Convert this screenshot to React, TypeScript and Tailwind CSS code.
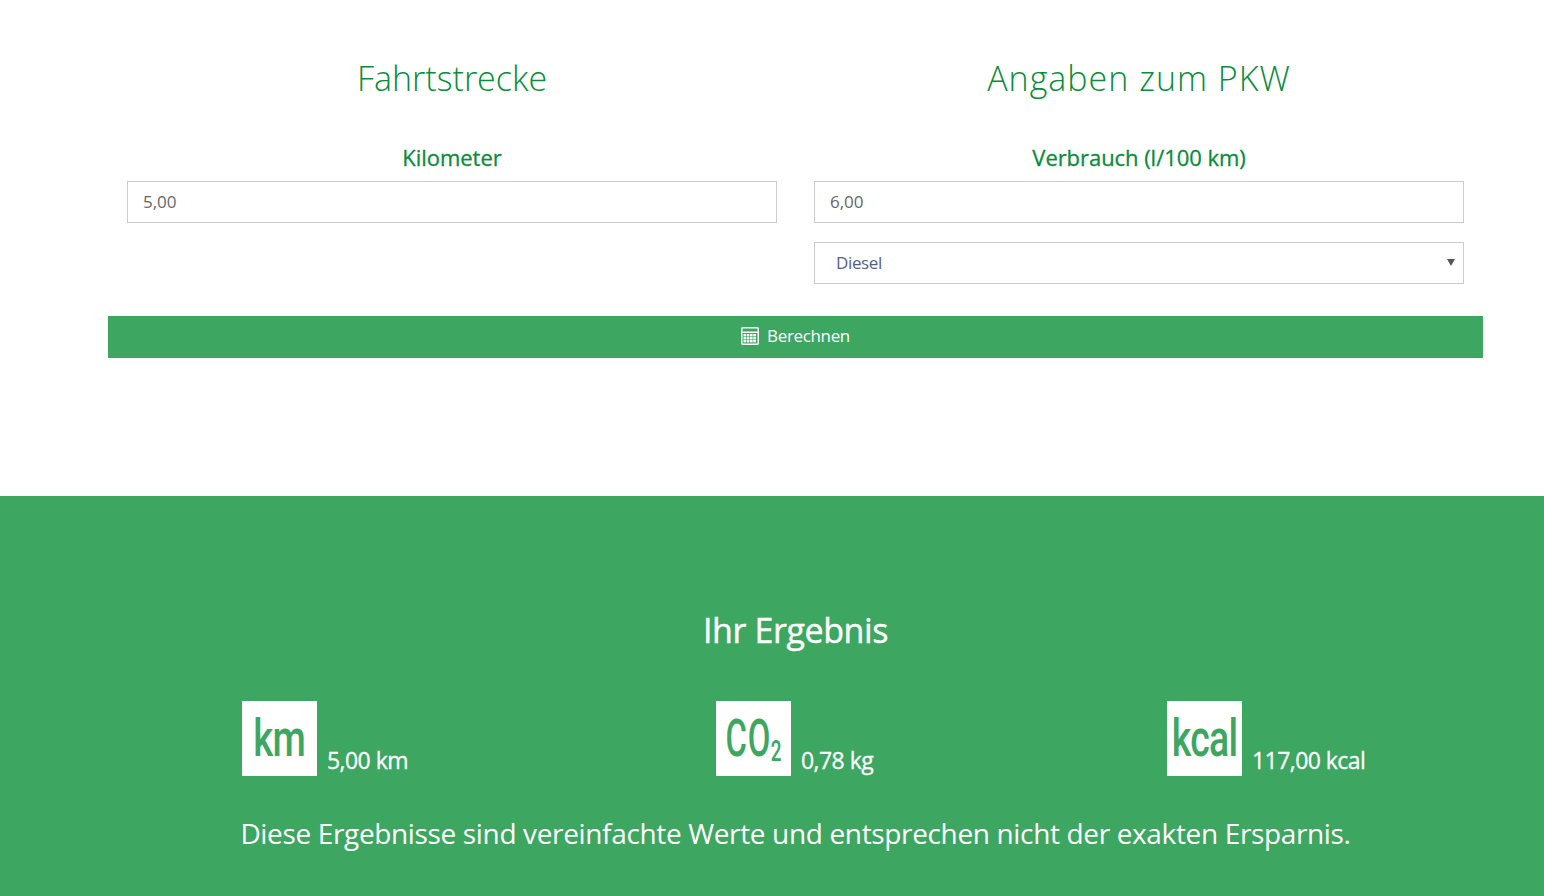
import React from 'react';

const font = { fontFamily: '"Open Sans", "Noto Sans", sans-serif' };

const CalculatorIcon = () => (
  <svg width="18" height="18" viewBox="0 0 18 18" className="block">
    <rect x="0.75" y="0.75" width="16.5" height="16.5" rx="1" fill="none" stroke="#fff" strokeWidth="1.5" />
    <rect x="1" y="4.5" width="16" height="1.5" fill="#fff" />
    {[7, 10, 13].map((y) =>
      [2.5, 5.75, 9, 12.25].map((x) => <rect key={`${x}-${y}`} x={x} y={y} width="2.6" height="2.4" fill="#fff" />)
    )}
  </svg>
);

const Field = ({ label, value }: { label: string; value: string }) => (
  <>
    <label className="block text-center text-[22px] leading-[30px] tracking-[-0.05px] [-webkit-text-stroke:0.3px] text-[#0a8c3a] mb-[8px] -mt-[1px] pb-[1px]">{label}</label>
    <input
      readOnly
      value={value}
      className="block w-full h-[42px] border border-[#cccccc] bg-white pl-[15px] pr-4 pb-[2px] text-[17px] tracking-[-0.05px] text-[#666666] outline-none"
    />
  </>
);

const ResultItem = ({ badge, value, badgeClass }: { badge: React.ReactNode; value: string; badgeClass: string }) => (
  <div className="flex items-end">
    <div className="w-[75px] h-[75px] bg-white flex items-center justify-center overflow-hidden shrink-0">
      <span className={`block font-medium text-[#3da661] ${badgeClass}`} style={{ fontFamily: '"Roboto", sans-serif' }}>
        {badge}
      </span>
    </div>
    <span className="ml-[10px] mb-[1px] text-[23px] leading-[30px] tracking-[-0.55px] [-webkit-text-stroke:0.3px] text-white">{value}</span>
  </div>
);

export default function App() {
  return (
    <div className="min-h-[896px] bg-white" style={font}>
      <section className="h-[496px] px-[108px] pt-[56px]">
        <div className="w-[1375px]">
          <div className="grid grid-cols-[687px_688px]">
            <div className="pl-[19px] pr-[18px]">
              <h2 className="text-center text-[34px] leading-[44px] font-light text-[#0a8c3a] mb-[43px]">Fahrtstrecke</h2>
              <Field label="Kilometer" value="5,00" />
            </div>
            <div className="px-[19px]">
              <h2 className="text-center text-[34px] leading-[44px] font-light tracking-[1px] text-[#0a8c3a] mb-[43px]">Angaben zum PKW</h2>
              <Field label="Verbrauch (l/100 km)" value="6,00" />
              <div className="relative mt-[19px]">
                <select className="block w-full h-[42px] appearance-none border border-[#cccccc] bg-white pl-[21px] pb-[1px] text-[17px] tracking-[-0.35px] text-[#555f85] outline-none">
                  <option>Diesel</option>
                </select>
                <span className="absolute right-[9px] top-[17px] w-0 h-0 border-x-[4px] border-x-transparent border-t-[7px] border-t-[#555555]" />
              </div>
            </div>
          </div>
          <button className="mt-[32px] w-full h-[42px] bg-[#3da661] text-white flex items-center justify-center gap-[8px] pb-[2px] text-[17px] tracking-[-0.35px]">
            <CalculatorIcon />
            Berechnen
          </button>
        </div>
      </section>
      <section className="h-[400px] bg-[#3da661] pt-[109px] text-white">
        <h2 className="ml-[108px] w-[1375px] text-center text-[34px] leading-[50px] tracking-[-0.4px] [-webkit-text-stroke:0.4px] mb-[46px]">Ihr Ergebnis</h2>
        <div className="grid grid-cols-[474px_451px_auto] pl-[242px]">
          <ResultItem badge="km" value="5,00 km" badgeClass="text-[52px] leading-none tracking-[-1px] [transform:scaleX(0.735)]" />
          <ResultItem
            badge={<>CO<sub className="text-[30px] align-baseline relative top-[5px]">2</sub></>}
            value="0,78 kg"
            badgeClass="text-[52px] leading-none tracking-[1px] [transform:scaleX(0.63)] whitespace-nowrap"
          />
          <ResultItem badge="kcal" value="117,00 kcal" badgeClass="text-[52px] leading-none tracking-[-1px] [transform:scaleX(0.72)] whitespace-nowrap" />
        </div>
        <p className="ml-[108px] w-[1375px] mt-[37px] text-center text-[28px] leading-[40px] tracking-[-0.35px]">
          Diese Ergebnisse sind vereinfachte Werte und entsprechen nicht der exakten Ersparnis.
        </p>
      </section>
    </div>
  );
}
